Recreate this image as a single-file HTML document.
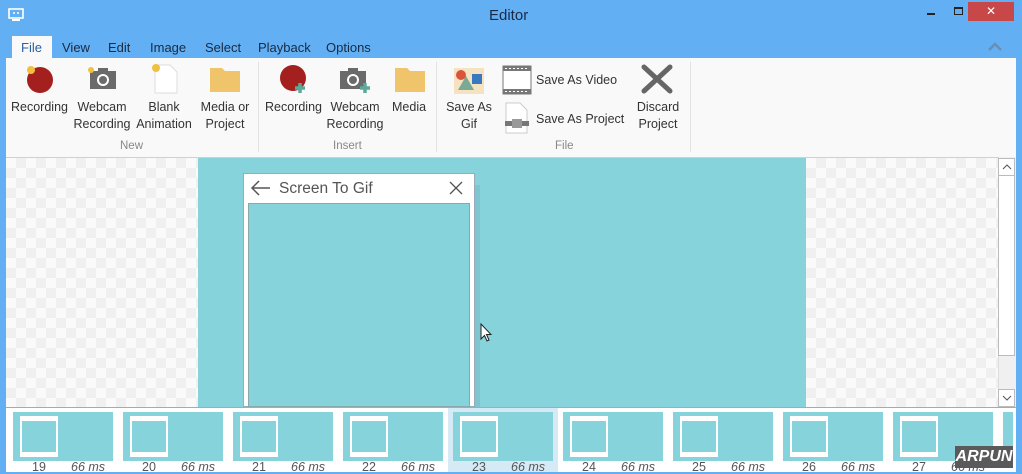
<!DOCTYPE html>
<html><head><meta charset="utf-8"><style>
*{margin:0;padding:0;box-sizing:border-box}
body{width:1022px;height:472px;overflow:hidden;background:#62aff4;font-family:"Liberation Sans",sans-serif;position:relative;color:#333}
.abs{position:absolute}
.tab{position:absolute;top:40px;font-size:13px;color:#1a2a40}
.lbl{position:absolute;font-size:12.5px;color:#333;text-align:center;line-height:17px;white-space:nowrap}
.grp{position:absolute;top:140px;font-size:11.5px;color:#888}
.sep{position:absolute;top:62px;width:1px;height:90px;background:#e2e2e2}
.check{background-color:#fafafa;background-image:linear-gradient(45deg,#f0f0f0 25%,transparent 25%,transparent 75%,#f0f0f0 75%),linear-gradient(45deg,#f0f0f0 25%,transparent 25%,transparent 75%,#f0f0f0 75%);background-size:20px 20px;background-position:0 0,10px 10px}
.th{position:absolute;top:412px;width:100px;height:49px;background:#86d3dc}
.th i{position:absolute;left:7px;top:4px;width:38px;height:41px;background:#86d3dc;border:1px solid #fff;border-left-width:2px;border-right-width:2px;border-top-width:5px;border-bottom-width:5px}
.tn{position:absolute;top:460px;font-size:12.5px;color:#555}
.tm{position:absolute;top:460px;font-size:12.5px;color:#555;font-style:italic}
</style></head><body>
<svg class="abs" style="left:8px;top:8px" width="16" height="14"><rect x="1" y="1" width="14" height="9" fill="none" stroke="#fff" stroke-width="1.6"/><rect x="4" y="11" width="8" height="2" fill="#fff"/><circle cx="6" cy="5" r="1" fill="#fff"/><circle cx="10" cy="5" r="1" fill="#fff"/></svg>
<div class="abs" style="left:489px;top:7px;font-size:15px;color:#1b2a44">Editor</div>
<div class="abs" style="left:927px;top:13px;width:8px;height:2px;background:#222"></div>
<div class="abs" style="left:954px;top:7px;width:9px;height:8px;border:1px solid #222;border-top-width:2px"></div>
<div class="abs" style="left:968px;top:2px;width:46px;height:19px;background:#c8484a;color:#fff;font-size:12px;text-align:center;line-height:19px">✕</div>
<svg class="abs" style="left:988px;top:42px" width="14" height="9"><path d="M1 8 L7 2 L13 8" stroke="#6a8db0" stroke-width="2.5" fill="none"/></svg>
<div class="abs" style="left:12px;top:36px;width:40px;height:24px;background:#f9f9f9"></div>
<div class="tab" style="left:21px;color:#2a5fa0">File</div>
<div class="tab" style="left:62px">View</div>
<div class="tab" style="left:108px">Edit</div>
<div class="tab" style="left:150px">Image</div>
<div class="tab" style="left:205px">Select</div>
<div class="tab" style="left:258px">Playback</div>
<div class="tab" style="left:326px">Options</div>
<div class="abs" style="left:6px;top:58px;width:1010px;height:99px;background:#f9f9f9"></div>
<div class="sep" style="left:258px"></div><div class="sep" style="left:436px"></div><div class="sep" style="left:690px"></div>
<svg class="abs" style="left:24px;top:62px" width="32" height="32"><circle cx="16" cy="18" r="13" fill="#a4201e"/><circle cx="7" cy="8" r="4" fill="#f0c040"/></svg>
<svg class="abs" style="left:86px;top:66px" width="32" height="26"><rect x="4" y="5" width="26" height="18" fill="#6a6a6a"/><rect x="12" y="2" width="10" height="4" fill="#6a6a6a"/><circle cx="17" cy="14" r="6" fill="#fff"/><circle cx="17" cy="14" r="4" fill="#6a6a6a"/><circle cx="5" cy="4" r="3" fill="#f0c040"/></svg>
<svg class="abs" style="left:150px;top:62px" width="30" height="32"><path d="M5 3 H20 L27 10 V31 H5 Z" fill="#fff" stroke="#ddd"/><circle cx="6" cy="6" r="4" fill="#f0c040"/></svg>
<svg class="abs" style="left:208px;top:66px" width="34" height="28"><path d="M2 2 H14 L17 5 H32 V26 H2 Z" fill="#f0c46a"/></svg>
<svg class="abs" style="left:278px;top:63px" width="32" height="32"><circle cx="15" cy="15" r="13" fill="#a4201e"/><path d="M22 20 V30 M17 25 H27" stroke="#5aaa9a" stroke-width="3.5"/></svg>
<svg class="abs" style="left:338px;top:66px" width="36" height="28"><rect x="2" y="5" width="26" height="18" fill="#6a6a6a"/><rect x="10" y="2" width="10" height="4" fill="#6a6a6a"/><circle cx="15" cy="14" r="6" fill="#fff"/><circle cx="15" cy="14" r="4" fill="#6a6a6a"/><path d="M27 17 V27 M22 22 H32" stroke="#5aaa9a" stroke-width="3.5"/></svg>
<svg class="abs" style="left:393px;top:66px" width="34" height="28"><path d="M2 2 H14 L17 5 H32 V26 H2 Z" fill="#f0c46a"/></svg>
<svg class="abs" style="left:452px;top:66px" width="34" height="28"><rect x="2" y="2" width="30" height="26" fill="#f4e2c0"/><path d="M6 24 L14 10 L22 24Z" fill="#7aaa96"/><circle cx="9" cy="9" r="5" fill="#d8553a"/><rect x="20" y="8" width="10" height="10" fill="#3a78c0"/></svg>
<svg class="abs" style="left:502px;top:65px" width="30" height="30"><rect x="1" y="1" width="28" height="28" fill="#fff" stroke="#777"/><rect x="1" y="1" width="28" height="5" fill="#777"/><rect x="1" y="24" width="28" height="5" fill="#777"/><path d="M3 3.5h24M3 26.5h24" stroke="#fff" stroke-dasharray="2 2"/></svg>
<svg class="abs" style="left:504px;top:102px" width="26" height="32"><path d="M2 1 H16 L23 8 V31 H2 Z" fill="#fff" stroke="#ccc"/><rect x="1" y="19" width="24" height="5" fill="#777"/><rect x="8" y="17" width="10" height="9" fill="#999"/></svg>
<svg class="abs" style="left:640px;top:64px" width="34" height="30"><path d="M4 3 L30 27 M30 3 L4 27" stroke="#666" stroke-width="5" stroke-linecap="round"/></svg>
<div class="lbl" style="left:11px;top:99px">Recording</div>
<div class="lbl" style="left:73px;top:99px;width:58px">Webcam<br>Recording</div>
<div class="lbl" style="left:135px;top:99px;width:58px">Blank<br>Animation</div>
<div class="lbl" style="left:196px;top:99px;width:58px">Media or<br>Project</div>
<div class="grp" style="left:120px">New</div>
<div class="lbl" style="left:265px;top:99px">Recording</div>
<div class="lbl" style="left:326px;top:99px;width:58px">Webcam<br>Recording</div>
<div class="lbl" style="left:392px;top:99px">Media</div>
<div class="grp" style="left:333px">Insert</div>
<div class="lbl" style="left:444px;top:99px;width:50px">Save As<br>Gif</div>
<div class="lbl" style="left:536px;top:72px">Save As Video</div>
<div class="lbl" style="left:536px;top:111px">Save As Project</div>
<div class="lbl" style="left:632px;top:99px;width:52px">Discard<br>Project</div>
<div class="grp" style="left:555px">File</div>
<div class="abs check" style="left:6px;top:157px;width:992px;height:250px;border-top:1px solid #d0d0d0"></div>
<div class="abs" style="left:198px;top:158px;width:608px;height:249px;background:#86d3dc"></div>
<div class="abs" style="left:243px;top:173px;width:232px;height:234px;background:#fff;border:1px solid #9ab"></div>
<div class="abs" style="left:248px;top:203px;width:222px;height:204px;background:#86d3dc;border:1px solid #8aa"></div>
<div class="abs" style="left:475px;top:185px;width:5px;height:222px;background:#7ec6cf"></div>
<svg class="abs" style="left:250px;top:180px" width="22" height="16"><path d="M20 8 H2 M9 1 L2 8 L9 15" stroke="#555" stroke-width="1.5" fill="none"/></svg>
<div class="abs" style="left:279px;top:180px;font-size:15.5px;color:#555">Screen To Gif</div>
<svg class="abs" style="left:449px;top:181px" width="14" height="14"><path d="M1 1 L13 13 M13 1 L1 13" stroke="#555" stroke-width="1.3"/></svg>
<svg class="abs" style="left:480px;top:323px" width="12" height="20"><path d="M1 1 V16 L4.5 12.5 L7 18 L9 17 L6.5 11.5 H11 Z" fill="#fff" stroke="#222"/></svg>
<div class="abs" style="left:998px;top:157px;width:18px;height:250px;background:#f0f0f0;border-left:1px solid #ddd"></div>
<div class="abs" style="left:998px;top:158px;width:17px;height:198px;background:#fff;border:1px solid #bbb"></div>
<div class="abs" style="left:998px;top:158px;width:17px;height:18px;background:#fff;border:1px solid #bbb"></div>
<svg class="abs" style="left:1002px;top:163px" width="10" height="7"><path d="M1 6 L5 2 L9 6" stroke="#555" fill="none"/></svg>
<div class="abs" style="left:998px;top:389px;width:17px;height:18px;background:#fff;border:1px solid #bbb"></div>
<svg class="abs" style="left:1002px;top:395px" width="10" height="7"><path d="M1 1 L5 5 L9 1" stroke="#555" fill="none"/></svg>
<div class="abs" style="left:6px;top:407px;width:1010px;height:65px;background:#fff;border-top:1px solid #aaa"></div>
<div class="abs" style="left:448px;top:408px;width:110px;height:64px;background:#d6eaf6"></div>
<div class="th" style="left:13px"><i></i></div><div class="tn" style="left:32px">19</div><div class="tm" style="left:71px">66 ms</div>
<div class="th" style="left:123px"><i></i></div><div class="tn" style="left:142px">20</div><div class="tm" style="left:181px">66 ms</div>
<div class="th" style="left:233px"><i></i></div><div class="tn" style="left:252px">21</div><div class="tm" style="left:291px">66 ms</div>
<div class="th" style="left:343px"><i></i></div><div class="tn" style="left:362px">22</div><div class="tm" style="left:401px">66 ms</div>
<div class="th" style="left:453px"><i></i></div><div class="tn" style="left:472px">23</div><div class="tm" style="left:511px">66 ms</div>
<div class="th" style="left:563px"><i></i></div><div class="tn" style="left:582px">24</div><div class="tm" style="left:621px">66 ms</div>
<div class="th" style="left:673px"><i></i></div><div class="tn" style="left:692px">25</div><div class="tm" style="left:731px">66 ms</div>
<div class="th" style="left:783px"><i></i></div><div class="tn" style="left:802px">26</div><div class="tm" style="left:841px">66 ms</div>
<div class="th" style="left:893px"><i></i></div><div class="tn" style="left:912px">27</div><div class="tm" style="left:951px">66 ms</div>
<div class="th" style="left:1003px;width:10px"></div>
<div class="abs" style="left:955px;top:446px;width:58px;height:22px;background:#5a5a5a;color:#fff;font-style:italic;font-weight:bold;font-size:16px;text-align:center;line-height:22px">ARPUN</div>
</body></html>
